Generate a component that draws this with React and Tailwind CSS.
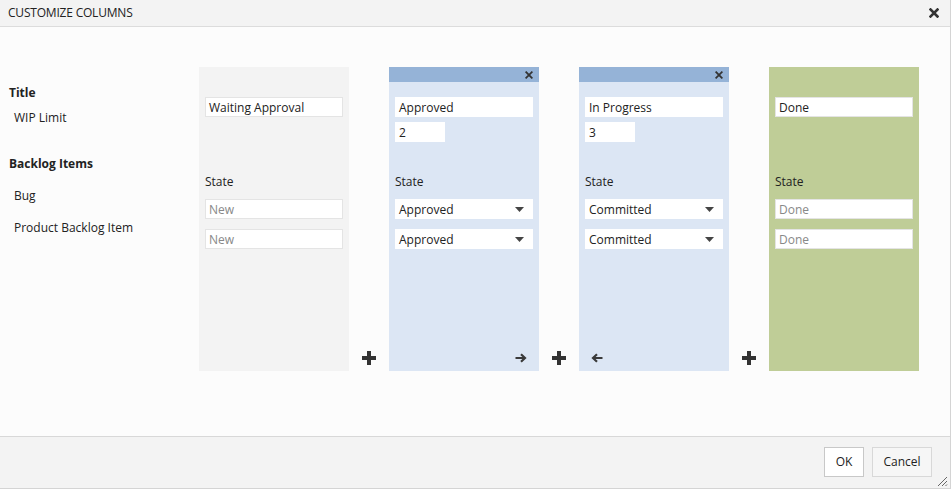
import React from 'react';

const font = { fontFamily: '"Open Sans", "Noto Sans", "Liberation Sans", sans-serif' };

const columns = [
  { name: 'Waiting Approval', wip: null, states: ['New', 'New'], kind: 'gray', removable: false, arrow: null },
  { name: 'Approved', wip: '2', states: ['Approved', 'Approved'], kind: 'blue', removable: true, arrow: 'right' },
  { name: 'In Progress', wip: '3', states: ['Committed', 'Committed'], kind: 'blue', removable: true, arrow: 'left' },
  { name: 'Done', wip: null, states: ['Done', 'Done'], kind: 'green', removable: false, arrow: null },
];

const styles = {
  gray: { body: 'bg-[#f3f3f3]', strip: 'bg-[#f3f3f3]', input: 'border-[#e4e4e4]' },
  blue: { body: 'bg-[#dce6f4]', strip: 'bg-[#95b3d7]', input: 'border-white' },
  green: { body: 'bg-[#bfcd97]', strip: 'bg-[#bfcd97]', input: 'border-[#e4e4e4]' },
};

const XIcon = ({ size = 8, stroke = 2.4 }) => (
  <svg width={size} height={size} viewBox="0 0 10 10">
    <path d="M1.5 1.5 L8.5 8.5 M8.5 1.5 L1.5 8.5" stroke="#333" strokeWidth={stroke} strokeLinecap="square" />
  </svg>
);

const Plus = () => (
  <svg width="14" height="14" viewBox="0 0 14 14">
    <rect x="5" y="0" width="4" height="14" fill="#333" />
    <rect x="0" y="5" width="14" height="4" fill="#333" />
  </svg>
);

const Arrow = ({ dir }) => (
  <svg width="12" height="10" viewBox="0 0 12 10" style={dir === 'left' ? { transform: 'scaleX(-1)' } : undefined}>
    <path d="M0.5 5 H10 M6 1.2 L10 5 L6 8.8" stroke="#3a3a3a" strokeWidth="2.2" fill="none" />
  </svg>
);

const Caret = () => (
  <svg width="9" height="5" viewBox="0 0 9 5">
    <path d="M0 0 H9 L4.5 5 Z" fill="#444" />
  </svg>
);

const Column = ({ col }) => {
  const s = styles[col.kind];
  return (
    <div className={`w-[150px] h-[304px] flex flex-col ${s.body}`}>
      <div className={`h-[15px] flex items-center justify-end pr-[6px] ${s.strip}`}>
        {col.removable && <XIcon size={8} stroke={2.2} />}
      </div>
      <div className="px-[6px] pt-[15px] flex flex-col">
        <div className={`h-[20px] w-[138px] border bg-white flex items-center px-[3px] pt-[2px] text-[12px] text-[#222] ${s.input}`}>
          {col.name}
        </div>
        <div className="h-[25px] pt-[5px]">
          {col.wip && (
            <div className={`h-[20px] w-[50px] border bg-white flex items-center px-[3px] pt-[2px] text-[12px] text-[#222] ${s.input}`}>
              {col.wip}
            </div>
          )}
        </div>
        <div className="mt-[32px] h-[16px] leading-[16px] text-[12px] text-[#222]">State</div>
        <div className="mt-[9px] flex flex-col gap-[10px]">
          {col.states.map((st, i) =>
            col.kind === 'blue' ? (
              <div key={i} className={`h-[20px] w-[138px] border bg-white flex items-center justify-between pl-[3px] pr-[8px] text-[12px] text-[#222] ${s.input}`}>
                <span className="pt-[2px]">{st}</span>
                <Caret />
              </div>
            ) : (
              <div key={i} className={`h-[20px] w-[138px] border bg-white flex items-center px-[3px] pt-[2px] text-[12px] text-[#888] ${s.input}`}>
                {st}
              </div>
            )
          )}
        </div>
      </div>
      <div className="flex-1" />
      <div className={`h-[26px] flex items-start pt-[8px] ${col.arrow === 'right' ? 'justify-end pr-[12px]' : 'justify-start pl-[12px]'}`}>
        {col.arrow && <Arrow dir={col.arrow} />}
      </div>
    </div>
  );
};

export default function App() {
  return (
    <div className="w-[952px] h-[490px] bg-white relative overflow-hidden" style={font}>
      <div className="w-[951px] h-[489px] flex flex-col border-r border-b border-[#d4d4d4]">
        <div className="h-[27px] bg-[#f3f3f3] border-b border-[#dcdcdc] flex items-center justify-between pl-[8px] pr-[11px]">
          <span className="text-[12px] text-[#222] tracking-[-0.2px]">CUSTOMIZE COLUMNS</span>
          <XIcon size={10} stroke={2.6} />
        </div>
        <div className="flex-1 bg-[#fcfcfc] flex pt-[40px]">
          <div className="w-[199px] flex flex-col text-[12px] text-[#222] leading-[16px]">
            <div className="mt-[18px] pl-[9px] font-bold">Title</div>
            <div className="mt-[9px] pl-[14px]">WIP Limit</div>
            <div className="mt-[30px] pl-[9px] font-bold">Backlog Items</div>
            <div className="mt-[16px] pl-[14px]">Bug</div>
            <div className="mt-[16px] pl-[14px]">Product Backlog Item</div>
          </div>
          <div className="flex items-start">
            {columns.map((col, i) => (
              <React.Fragment key={col.name}>
                {i > 0 && (
                  <div className="w-[40px] h-[304px] flex items-end justify-center pb-[6px]">
                    <Plus />
                  </div>
                )}
                <Column col={col} />
              </React.Fragment>
            ))}
          </div>
        </div>
        <div className="h-[52px] bg-[#f3f3f3] border-t border-[#d8d8d8] flex items-start justify-end pt-[10px] pr-[18px] gap-[8px]">
          <button className="h-[30px] w-[40px] bg-white border border-[#c8c8c8] text-[12px] text-[#222]">OK</button>
          <button className="h-[30px] w-[60px] bg-[#f6f6f6] border border-[#d8d8d8] text-[12px] text-[#222]">Cancel</button>
        </div>
      </div>
      <svg className="absolute right-[4px] bottom-[3px]" width="12" height="12" viewBox="0 0 12 12">
        <path d="M11 2 L2 11 M11 6 L6 11 M11 9.5 L9.5 11" stroke="#666" strokeWidth="1" />
      </svg>
    </div>
  );
}
